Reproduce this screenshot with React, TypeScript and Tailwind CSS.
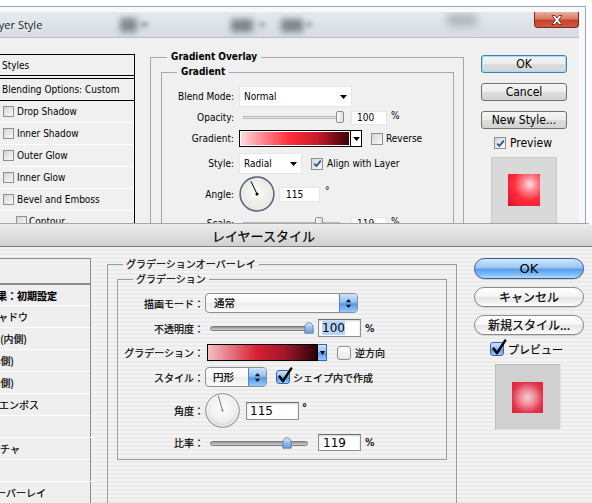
import React from "react";

const WIN = "font-['DejaVu_Sans_Condensed','DejaVu_Sans',sans-serif] [font-stretch:condensed]";
const JP = "font-['Noto_Sans_CJK_JP',sans-serif]";
const LUC = "font-['DejaVu_Sans',sans-serif]";

function WinCheck({ checked, size = 12 }: { checked?: boolean; size?: number }) {
  return (
    <span
      className={`flex shrink-0 items-center justify-center border border-[#8f8f8f] bg-[linear-gradient(135deg,#d3d6da,#f9f9f9)] ${
        size === 11 ? "w-[11px] h-[11px]" : "w-[12px] h-[12px]"
      }`}
    >
      {checked && (
        <svg width="9" height="9" viewBox="0 0 9 9">
          <path d="M1.2 4.6 L3.4 7 L7.8 1.6" stroke="#2c4c8c" strokeWidth="1.7" fill="none" />
        </svg>
      )}
    </span>
  );
}

function WinTri() {
  return (
    <svg width="7" height="4" viewBox="0 0 7 4">
      <path d="M0 0H7L3.5 4Z" fill="#000" />
    </svg>
  );
}

function WinButton({ children, focused, className }: { children: React.ReactNode; focused?: boolean; className?: string }) {
  return (
    <div
      className={`h-[18px] rounded-[3px] border flex items-center justify-center text-[12px] leading-none text-black bg-[linear-gradient(to_bottom,#f5f5f5_0%,#ececec_48%,#dddddd_52%,#d3d3d3_100%)] ${
        focused ? "border-[#3c7fb1] shadow-[inset_0_0_0_1px_#a8dcf8]" : "border-[#707070]"
      } ${className ?? ""}`}
    >
      {children}
    </div>
  );
}

function WinDial() {
  return (
    <svg width="36" height="36" viewBox="0 0 36 36">
      <defs>
        <radialGradient id="bdial" cx="50%" cy="45%" r="55%">
          <stop offset="0" stopColor="#fbfbf8" />
          <stop offset="1" stopColor="#e6e6e0" />
        </radialGradient>
      </defs>
      <circle cx="18" cy="18" r="16.9" fill="url(#bdial)" stroke="#52607c" strokeWidth="1.5" />
      <line x1="18" y1="18" x2="12" y2="5.3" stroke="#000" strokeWidth="1" />
      <circle cx="18" cy="18" r="1.5" fill="#000" />
    </svg>
  );
}

function WinSlider({ thumb }: { thumb: number }) {
  return (
    <div className="relative ml-[5px] w-[108px] h-[15px]">
      <div className="absolute left-[4px] top-[6px] w-[97px] h-[3px] border border-[#b8b8b8] bg-[#e9e9e9]" />
      <div
        className="absolute top-[1px] w-[8px] h-[12px] rounded-[2px] border border-[#8c8c8c] bg-[linear-gradient(to_right,#fdfdfd,#dcdcdc)]"
        style={{ left: thumb }}
      />
    </div>
  );
}

function BackWindow() {
  return (
    <div className={`absolute left-0 top-[6px] w-[586px] h-[240px] border-t border-r border-[#9aa3ad] bg-[#f7f8f9] ${WIN}`}>
      <div className="relative mt-[5px] mr-[6px] h-[25px] overflow-hidden bg-[linear-gradient(to_bottom,#e6eaee,#d6dce2)] flex items-start">
        <div className="absolute left-[120px] top-[6px] w-[17px] h-[14px] bg-[#59626c] blur-[3px] opacity-70" />
        <div className="absolute left-[141px] top-[10px] w-[7px] h-[5px] bg-[#6b737c] blur-[2px] opacity-60" />
        <div className="absolute left-[231px] top-[7px] w-[22px] h-[13px] bg-[#555e68] blur-[3px] opacity-70" />
        <div className="absolute left-[259px] top-[10px] w-[6px] h-[5px] bg-[#6b737c] blur-[2px] opacity-50" />
        <div className="absolute left-[281px] top-[7px] w-[22px] h-[13px] bg-[#555e68] blur-[3px] opacity-70" />
        <div className="absolute left-[306px] top-[10px] w-[6px] h-[5px] bg-[#6b737c] blur-[2px] opacity-50" />
        <div className="absolute left-[447px] top-[2px] w-[30px] h-[12px] bg-[#8d959e] blur-[4px] opacity-60" />
        <span className="relative ml-[-13px] mt-[6px] text-[11px] leading-[14px] text-[#1b1b1b] font-['Open_Sans',sans-serif] [font-stretch:normal] [text-shadow:0_0_5px_#ffffff]">
          Layer Style
        </span>
        <div className="relative ml-auto w-[45px] h-[16px] rounded-b-[4px] border border-t-0 border-[#7e2a1c] bg-[linear-gradient(to_bottom,#eab0a2_0%,#da7a63_45%,#c8442b_55%,#d0583d_100%)] flex items-center justify-center">
          <svg width="12" height="10" viewBox="0 0 12 10">
            <path d="M1 0.5 H4 L6 3 L8 0.5 H11 L7.6 5 L11 9.5 H8 L6 7 L4 9.5 H1 L4.4 5 Z" fill="#ffffff" stroke="#5a1e14" strokeWidth="0.8" />
          </svg>
        </div>
      </div>
      <div className="mr-[6px] h-[205px] bg-[#f0f0f0] border-t border-[#b9c0c7] flex items-start text-[10px] text-black">
        {/* list */}
        <div className="mt-[16px] w-[135px] shrink-0 border-t border-r border-black">
          <div className="h-[21px] flex items-center pl-[2px] border-b border-black">Styles</div>
          <div className="h-[2px]" />
          <div className="h-[23px] flex items-center pl-[2px] border-t border-b border-black">Blending Options: Custom</div>
          {["Drop Shadow", "Inner Shadow", "Outer Glow", "Inner Glow", "Bevel and Emboss"].map((t) => (
            <div key={t} className="h-[22px] flex items-center pl-[3px] border-b border-white">
              <WinCheck size={11} />
              <span className="ml-[3px]">{t}</span>
            </div>
          ))}
          <div className="h-[22px] flex items-center pl-[16px] border-b border-white">
            <WinCheck size={11} />
            <span className="ml-[2px]">Contour</span>
          </div>
        </div>

        {/* group */}
        <fieldset className="ml-[15px] mt-[12px] w-[314px] h-[190px] shrink-0 border border-[#a7a7a7]">
          <legend className="ml-[16px] px-[4px] font-bold leading-[14px]">Gradient Overlay</legend>
          <fieldset className="ml-[10px] mt-[1px] w-[293px] h-[175px] border border-[#a7a7a7]">
            <legend className="ml-[15px] px-[4px] font-bold leading-[14px]">Gradient</legend>

            <div className="mt-[7px] h-[21px] flex items-center">
              <span className="w-[72px] text-right">Blend Mode:</span>
              <div className="ml-[5px] w-[113px] h-[21px] bg-white border border-[#e6e6e6] flex items-center justify-between px-[4px]">
                <span>Normal</span>
                <WinTri />
              </div>
            </div>

            <div className="mt-[3px] h-[15px] flex items-center">
              <span className="w-[72px] text-right">Opacity:</span>
              <WinSlider thumb={97} />
              <div className="ml-[4px] w-[36px] h-[14px] bg-white border border-[#e6e6e6] pl-[5px] leading-[12px]">100</div>
              <span className="ml-[4px] self-start leading-[11px]">%</span>
            </div>

            <div className="mt-[5px] h-[17px] flex items-center">
              <span className="w-[72px] text-right">Gradient:</span>
              <div className="ml-[5px] w-[123px] h-[17px] flex border border-black">
                <div className="flex-1 border border-white bg-[linear-gradient(to_right,#ffd9dc_0%,#ff8891_20%,#ff2d3a_45%,#c81d2c_70%,#3e0006_100%)]" />
                <div className="w-[11px] border-l border-black bg-white flex items-center justify-center">
                  <WinTri />
                </div>
              </div>
              <span className="ml-[9px]">
                <WinCheck />
              </span>
              <span className="ml-[3px]">Reverse</span>
            </div>

            <div className="mt-[6px] h-[21px] flex items-center">
              <span className="w-[72px] text-right">Style:</span>
              <div className="ml-[5px] w-[63px] h-[21px] bg-white border border-[#e6e6e6] flex items-center justify-between px-[4px]">
                <span>Radial</span>
                <WinTri />
              </div>
              <span className="ml-[9px]">
                <WinCheck checked />
              </span>
              <span className="ml-[4px]">Align with Layer</span>
            </div>

            <div className="mt-[2px] h-[36px] flex items-center">
              <span className="w-[72px] text-right">Angle:</span>
              <div className="ml-[5px]">
                <WinDial />
              </div>
              <div className="ml-[4px] w-[41px] h-[15px] bg-white border border-[#e6e6e6] pl-[6px] leading-[13px]">115</div>
              <span className="ml-[5px] self-start mt-[10px] leading-[10px]">°</span>
            </div>

            <div className="mt-[4px] h-[15px] flex items-center">
              <span className="w-[72px] text-right">Scale:</span>
              <WinSlider thumb={76} />
              <div className="ml-[4px] w-[36px] h-[14px] bg-white border border-[#e6e6e6] pl-[5px] leading-[12px]">119</div>
              <span className="ml-[4px] self-start leading-[11px]">%</span>
            </div>
          </fieldset>
        </fieldset>

        {/* buttons */}
        <div className="ml-[17px] mt-[17px] w-[86px] shrink-0 flex flex-col">
          <WinButton focused>OK</WinButton>
          <WinButton className="mt-[10px]">Cancel</WinButton>
          <WinButton className="mt-[10px]">New Style...</WinButton>
          <div className="mt-[8px] h-[12px] flex items-center">
            <span className="ml-[13px]">
              <WinCheck checked />
            </span>
            <span className="ml-[4px] text-[12px]">Preview</span>
          </div>
          <div className="mt-[8px] ml-[10px] w-[66px] h-[80px] bg-[#d9d9d9] border border-[#c9c9c9] pt-[16px] pl-[16px]">
            <div className="w-[32px] h-[32px] bg-[radial-gradient(circle_at_68%_32%,#ffe4e7_0%,#ff8a94_22%,#ff2d3c_52%,#d8142a_100%)]" />
          </div>
        </div>
      </div>
    </div>
  );
}

/* ---------------- Mac front window ---------------- */

function Stepper() {
  return (
    <span className="w-[18px] h-full border-l border-[#5b82c0] bg-[linear-gradient(to_bottom,#cfe5fb_0%,#93c2f2_45%,#5598ea_55%,#93cdfc_100%)] flex items-center justify-center">
      <svg width="7" height="11" viewBox="0 0 7 11">
        <path d="M3.5 1 L6.2 4.2 H0.8 Z M3.5 10 L6.2 6.8 H0.8 Z" fill="#111" />
      </svg>
    </span>
  );
}

function AquaCheck({ checked }: { checked?: boolean }) {
  return (
    <span
      className={`relative block w-[14px] h-[14px] shrink-0 rounded-[3px] border ${
        checked
          ? "border-[#3b64a6] bg-[linear-gradient(to_bottom,#cfe5fb_0%,#93c2f2_45%,#5598ea_55%,#93cdfc_100%)]"
          : "border-[#8e8e8e] bg-[linear-gradient(to_bottom,#fdfdfd,#e6e6e6)]"
      }`}
    >
      {checked && (
        <svg className="absolute left-[0px] top-[-4px]" width="16" height="17" viewBox="0 0 16 17">
          <path d="M2.6 9.5 L6 14.2 L14.2 1.5" stroke="#000" strokeWidth="2.4" fill="none" strokeLinecap="round" strokeLinejoin="round" />
        </svg>
      )}
    </span>
  );
}

function AquaButton({ children, blue, className }: { children: React.ReactNode; blue?: boolean; className?: string }) {
  return (
    <div
      className={`rounded-full border flex items-center justify-center text-[12px] leading-none text-black shadow-[0_1px_1px_rgba(0,0,0,0.15)] ${
        blue
          ? "h-[21px] border-[#2f5a9e] bg-[linear-gradient(to_bottom,#d2e7fc_0%,#98c6f3_46%,#5a9cea_54%,#7cbaf6_80%,#b6def9_100%)]"
          : "h-[20px] border-[#8a8a8a] bg-[linear-gradient(to_bottom,#ffffff_0%,#f5f5f5_46%,#e6e6e6_54%,#f1f1f1_80%,#ffffff_100%)]"
      } ${className ?? ""}`}
    >
      {children}
    </div>
  );
}

function MacSlider({ thumb }: { thumb: number }) {
  return (
    <div className="relative ml-[1px] w-[113px] h-[14px]">
      <div className="absolute left-[5px] top-[5px] w-[98px] h-[5px] rounded-full border border-[#7d7d7d] bg-[linear-gradient(to_bottom,#8f8f8f,#d6d6d6)]" />
      <svg className="absolute top-[1px]" style={{ left: thumb }} width="10" height="12" viewBox="0 0 10 12">
        <defs>
          <linearGradient id={`mth${thumb}`} x1="0" y1="0" x2="0" y2="1">
            <stop offset="0" stopColor="#e6f1ff" />
            <stop offset="0.5" stopColor="#93bbec" />
            <stop offset="1" stopColor="#6c9ad8" />
          </linearGradient>
        </defs>
        <path
          d="M5 0.8 C7.6 0.8 9.2 3.2 9.2 5.8 V11.2 H0.8 V5.8 C0.8 3.2 2.4 0.8 5 0.8 Z"
          fill={`url(#mth${thumb})`}
          stroke="#55739f"
          strokeWidth="0.8"
        />
      </svg>
    </div>
  );
}

function MacDial() {
  return (
    <svg width="35" height="35" viewBox="0 0 35 35">
      <defs>
        <radialGradient id="mdial" cx="50%" cy="42%" r="58%">
          <stop offset="0" stopColor="#ffffff" />
          <stop offset="0.7" stopColor="#eeeeee" />
          <stop offset="1" stopColor="#cdcdcd" />
        </radialGradient>
      </defs>
      <circle cx="17.5" cy="17.5" r="16.8" fill="url(#mdial)" stroke="#8a8a8a" strokeWidth="1" />
      <circle cx="17.5" cy="17.5" r="15.6" fill="none" stroke="#ffffff" strokeWidth="0.8" opacity="0.8" />
      <line x1="17.5" y1="17.5" x2="13.3" y2="2.8" stroke="#777" strokeWidth="1" />
      <circle cx="17.5" cy="17.5" r="1.1" fill="#777" />
    </svg>
  );
}

const macInput = "border border-[#8e8e8e] border-t-[#6f6f6f] bg-white shadow-[inset_0_1px_2px_rgba(0,0,0,0.18)]";

function FrontWindow() {
  const rows: { t: string; pr: string }[] = [
    { t: "ドロップシャドウ", pr: "pr-[62px]" },
    { t: "シャドウ (内側)", pr: "pr-[63px]" },
    { t: "光彩 (外側)", pr: "pr-[76px]" },
    { t: "光彩 (内側)", pr: "pr-[76px]" },
    { t: "ベベルとエンボス", pr: "pr-[51px]" },
    { t: "輪郭", pr: "pr-[96px]" },
    { t: "テクスチャ", pr: "pr-[70px]" },
    { t: "サテン", pr: "pr-[96px]" },
    { t: "カラーオーバーレイ", pr: "pr-[44px]" },
  ];
  return (
    <div className={`absolute left-0 top-[223px] w-[593px] h-[290px] rounded-tr-[6px] overflow-hidden ${JP} text-black [-webkit-text-stroke:0.2px_#000]`}>
      <div className="h-[24px] border-t border-b border-t-[#a5a5a5] border-b-[#7b7b7b] bg-[linear-gradient(to_bottom,#ececec,#d1d1d1)] flex items-center pl-[212px] text-[13px] leading-none">
        レイヤースタイル
      </div>
      <div className="h-[270px] bg-[repeating-linear-gradient(to_bottom,#f3f3f3_0px,#f3f3f3_2px,#ebebeb_2px,#ebebeb_4px)] flex items-start">
        {/* list */}
        <div className="mt-[11px] w-[91px] h-[260px] shrink-0 border-t border-r border-[#8b8b8b] bg-[#efefef] text-[10px]">
          <div className="h-[26px] border-b-2 border-[#8b8b8b]" />
          <div className="h-[21px] flex items-center justify-end whitespace-nowrap pr-[33px] border-b border-white font-bold">
            レイヤー効果：初期設定
          </div>
          {rows.map((r) => (
            <div key={r.t} className={`h-[22px] flex items-center justify-end whitespace-nowrap border-b border-white ${r.pr}`}>
              {r.t}
            </div>
          ))}
        </div>

        {/* group */}
        <fieldset className="ml-[16px] mt-[10px] w-[350px] h-[262px] shrink-0 border border-[#9c9c9c]">
          <legend className="ml-[15px] px-[3px] text-[10px] leading-[14px]">グラデーションオーバーレイ</legend>
          <fieldset className="ml-[9px] mt-[1px] w-[330px] pb-[8px] border border-[#9c9c9c] text-[10px]">
            <legend className="ml-[15px] px-[3px] leading-[14px]">グラデーション</legend>

            <div className="mt-[7px] h-[20px] flex items-center">
              <span className="w-[86px] text-right">描画モード：</span>
              <div className="ml-[1px] w-[153px] h-[20px] rounded-[4px] border border-[#8e8e8e] overflow-hidden flex bg-[linear-gradient(to_bottom,#ffffff_0%,#f6f6f6_50%,#ececec_51%,#fafafa_100%)]">
                <span className="flex-1 pl-[8px] flex items-center text-[10.5px]">通常</span>
                <Stepper />
              </div>
            </div>

            <div className="mt-[6px] h-[18px] flex items-center">
              <span className="w-[86px] text-right">不透明度：</span>
              <MacSlider thumb={99} />
              <div className={`w-[43px] h-[18px] pl-[3px] flex items-center ${macInput} ${LUC} text-[12px] [-webkit-text-stroke:0px]`}>
                <span className="bg-[#b5d5fe] leading-[14px]">100</span>
              </div>
              <span className={`ml-[4px] ${LUC} text-[10px]`}>%</span>
            </div>

            <div className="mt-[7px] h-[17px] flex items-center">
              <span className="w-[86px] text-right">グラデーション：</span>
              <div className="ml-[3px] w-[111px] h-[17px] border border-black bg-[linear-gradient(to_right,#f4bfc5_0%,#e67784_20%,#d6202f_45%,#a3182a_70%,#2a0307_100%)]" />
              <div className="w-[9px] h-[17px] border border-l-0 border-[#3b64a6] bg-[linear-gradient(to_bottom,#cfe5fb_0%,#93c2f2_45%,#5598ea_55%,#93cdfc_100%)] flex items-center justify-center">
                <svg width="5" height="4" viewBox="0 0 5 4">
                  <path d="M0 0H5L2.5 4Z" fill="#000" />
                </svg>
              </div>
              <span className="ml-[10px]">
                <AquaCheck />
              </span>
              <span className="ml-[4px]">逆方向</span>
            </div>

            <div className="mt-[6px] h-[20px] flex items-center">
              <span className="w-[86px] text-right">スタイル：</span>
              <div className="ml-[1px] w-[62px] h-[20px] rounded-[4px] border border-[#8e8e8e] overflow-hidden flex bg-[linear-gradient(to_bottom,#ffffff_0%,#f6f6f6_50%,#ececec_51%,#fafafa_100%)]">
                <span className="flex-1 pl-[7px] flex items-center text-[10.5px]">円形</span>
                <Stepper />
              </div>
              <span className="ml-[9px]">
                <AquaCheck checked />
              </span>
              <span className="ml-[3px]">シェイプ内で作成</span>
            </div>

            <div className="mt-[6px] h-[35px] flex items-center">
              <span className="w-[86px] text-right">角度：</span>
              <div className="ml-[1px]">
                <MacDial />
              </div>
              <div className={`ml-[6px] w-[53px] h-[18px] pl-[3px] flex items-center ${macInput} ${LUC} text-[12px] [-webkit-text-stroke:0px]`}>115</div>
              <span className={`ml-[3px] self-start mt-[10px] ${LUC} text-[10px] leading-[10px]`}>°</span>
            </div>

            <div className="mt-[6px] h-[17px] flex items-center">
              <span className="w-[86px] text-right">比率：</span>
              <MacSlider thumb={77} />
              <div className={`w-[43px] h-[17px] pl-[4px] flex items-center ${macInput} ${LUC} text-[12px] [-webkit-text-stroke:0px]`}>119</div>
              <span className={`ml-[4px] ${LUC} text-[10px]`}>%</span>
            </div>
          </fieldset>
        </fieldset>

        {/* buttons */}
        <div className="ml-[17px] mt-[11px] w-[110px] shrink-0 flex flex-col">
          <AquaButton blue>
            <span className={`${LUC} text-[13px] [-webkit-text-stroke:0px]`}>OK</span>
          </AquaButton>
          <AquaButton className="mt-[8px]">キャンセル</AquaButton>
          <AquaButton className="mt-[8px]">新規スタイル...</AquaButton>
          <div className="mt-[7px] h-[14px] flex items-center">
            <span className="ml-[16px]">
              <AquaCheck checked />
            </span>
            <span className="ml-[4px] text-[11px] leading-none">プレビュー</span>
          </div>
          <div className="mt-[8px] ml-[21px] w-[66px] h-[66px] bg-[#d0d0d0] border border-[#bcbcbc] border-r-[#e4e4e4] border-b-[#e4e4e4] pt-[17px] pl-[16px]">
            <div className="w-[31px] h-[31px] bg-[radial-gradient(circle_at_50%_50%,#f6ccd2_0%,#ee8a97_35%,#e2334a_70%,#dd2237_100%)]" />
          </div>
        </div>
      </div>
    </div>
  );
}

export default function App() {
  return (
    <div className="relative w-[592px] h-[503px] overflow-hidden bg-white">
      <BackWindow />
      <FrontWindow />
    </div>
  );
}
